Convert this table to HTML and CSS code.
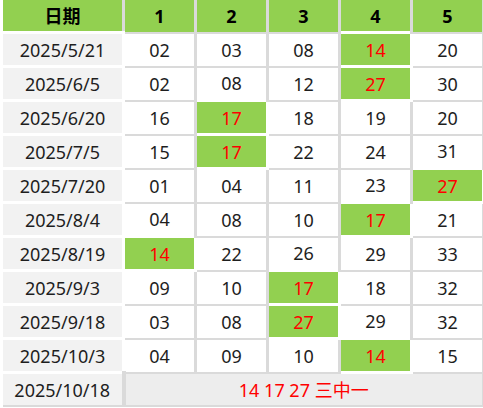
FILE: index.html
```html
<!DOCTYPE html>
<html lang="zh">
<head>
<meta charset="utf-8">
<title>开奖记录</title>
<link rel="stylesheet" href="styles.css">
</head>
<body>
<table class="grid">
  <colgroup>
    <col class="c-date"><col class="c-num"><col class="c-num"><col class="c-num"><col class="c-num"><col class="c-num">
  </colgroup>
  <thead>
    <tr><th class="h-date">日期</th><th>1</th><th>2</th><th>3</th><th>4</th><th>5</th></tr>
  </thead>
  <tbody>
    <tr><td class="d">2025/5/21</td><td>02</td><td>03</td><td>08</td><td class="hit">14</td><td>20</td></tr>
    <tr><td class="d">2025/6/5</td><td>02</td><td>08</td><td>12</td><td class="hit">27</td><td>30</td></tr>
    <tr><td class="d">2025/6/20</td><td>16</td><td class="hit">17</td><td>18</td><td>19</td><td>20</td></tr>
    <tr><td class="d">2025/7/5</td><td>15</td><td class="hit">17</td><td>22</td><td>24</td><td>31</td></tr>
    <tr><td class="d">2025/7/20</td><td>01</td><td>04</td><td>11</td><td>23</td><td class="hit">27</td></tr>
    <tr><td class="d">2025/8/4</td><td>04</td><td>08</td><td>10</td><td class="hit">17</td><td>21</td></tr>
    <tr><td class="d">2025/8/19</td><td class="hit">14</td><td>22</td><td>26</td><td>29</td><td>33</td></tr>
    <tr><td class="d">2025/9/3</td><td>09</td><td>10</td><td class="hit">17</td><td>18</td><td>32</td></tr>
    <tr><td class="d">2025/9/18</td><td>03</td><td>08</td><td class="hit">27</td><td>29</td><td>32</td></tr>
    <tr><td class="d">2025/10/3</td><td>04</td><td>09</td><td>10</td><td class="hit">14</td><td>15</td></tr>
    <tr class="last"><td class="d d-last">2025/10/18</td><td class="result" colspan="5">14 17 27 三中一</td></tr>
  </tbody>
</table>
</body>
</html>
```
FILE: styles.css
```css
html, body {
  margin: 0;
  padding: 0;
  background: #ffffff;
}

.grid {
  border-collapse: collapse;
  table-layout: fixed;
  width: 483px;
  font-family: "Noto Sans", "Noto Sans CJK SC", sans-serif;
  font-size: 18px;
  color: #1e1e1e;
}

.c-date { width: 122px; }
.c-num { width: 72px; }

.grid th,
.grid td {
  padding: 0;
  text-align: center;
  vertical-align: middle;
  border-style: solid;
  border-color: #dadada;
  border-width: 2px 3px;
  line-height: 20px;
}

.grid th {
  height: 31px;
  background: #92d050;
  color: #000;
  font-weight: 700;
  font-size: 18px;
  border-top-width: 0;
}

.grid th.h-date {
  border-left: 3px solid #ffffff;
  border-bottom: 3px solid #ffffff;
}

.grid td {
  height: 31px;
  background: #ffffff;
}

.grid td.d {
  background: #f2f2f2;
  border: 3px solid #ffffff;
}

.grid td.hit {
  background: #92d050;
  color: #ff0000;
  border: 3px solid #ffffff;
}

.grid td.d-last {
  border-bottom: 2px solid #dadada;
}

.grid td.result {
  background: #ededed;
  color: #ff0000;
  border-left: 4px solid #dadada;
}
```
